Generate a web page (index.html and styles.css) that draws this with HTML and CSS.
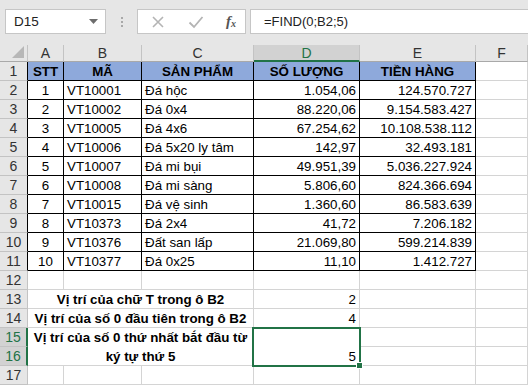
FILE: index.html
```html
<!DOCTYPE html>
<html lang="vi">
  <head>
    <meta charset="UTF-8" />
    <title>FIND</title>
    <link rel="stylesheet" href="styles.css">
  </head>
  <body>
    <!-- Formula bar -->
    <div class="toolbar">
      <div class="name-box">
        <span>D15</span>
        <svg class="caret" width="9" height="5" viewBox="0 0 9 5"><path d="M0 0h9L4.5 5z" fill="#6d6d6d"/></svg>
      </div>
      <div class="grip"><i></i><i></i><i></i></div>
      <div class="fx-buttons">
        <svg width="14" height="14" viewBox="0 0 14 14"><path d="M2 2l10 10M12 2L2 12" stroke="#b4b4b4" stroke-width="1.6"/></svg>
        <svg width="16" height="14" viewBox="0 0 16 14"><path d="M1.5 7.5l4.5 4.5L14.5 2" stroke="#b4b4b4" stroke-width="1.8" fill="none"/></svg>
        <span class="fx">f<sub>x</sub></span>
      </div>
      <div class="formula">=FIND(0;B2;5)</div>
    </div>

    <!-- Sheet -->
    <div class="sheet">
      <div class="ch corner"><svg width="12" height="12" viewBox="0 0 12 12"><path d="M12 0v12H0z" fill="#b7b7b7"/></svg></div>
      <div class="ch">A</div>
      <div class="ch">B</div>
      <div class="ch">C</div>
      <div class="ch sel">D</div>
      <div class="ch">E</div>
      <div class="ch">F</div>

      <div class="rh edge">1</div>
      <div class="c t head">STT</div>
      <div class="c t head">MÃ</div>
      <div class="c t head">SẢN PHẨM</div>
      <div class="c t head">SỐ LƯỢNG</div>
      <div class="c t head">TIỀN HÀNG</div>
      <div class="c"></div>

      <div class="rh edge">2</div><div class="c t mid">1</div><div class="c t">VT10001</div><div class="c t">Đá hộc</div><div class="c t num">1.054,06</div><div class="c t num">124.570.727</div><div class="c"></div>
      <div class="rh edge">3</div><div class="c t mid">2</div><div class="c t">VT10002</div><div class="c t">Đá 0x4</div><div class="c t num">88.220,06</div><div class="c t num">9.154.583.427</div><div class="c"></div>
      <div class="rh edge">4</div><div class="c t mid">3</div><div class="c t">VT10005</div><div class="c t">Đá 4x6</div><div class="c t num">67.254,62</div><div class="c t num">10.108.538.112</div><div class="c"></div>
      <div class="rh edge">5</div><div class="c t mid">4</div><div class="c t">VT10006</div><div class="c t">Đá 5x20 ly tâm</div><div class="c t num">142,97</div><div class="c t num">32.493.181</div><div class="c"></div>
      <div class="rh edge">6</div><div class="c t mid">5</div><div class="c t">VT10007</div><div class="c t">Đá mi bụi</div><div class="c t num">49.951,39</div><div class="c t num">5.036.227.924</div><div class="c"></div>
      <div class="rh edge">7</div><div class="c t mid">6</div><div class="c t">VT10008</div><div class="c t">Đá mi sàng</div><div class="c t num">5.806,60</div><div class="c t num">824.366.694</div><div class="c"></div>
      <div class="rh edge">8</div><div class="c t mid">7</div><div class="c t">VT10015</div><div class="c t">Đá vệ sinh</div><div class="c t num">1.360,60</div><div class="c t num">86.583.639</div><div class="c"></div>
      <div class="rh edge">9</div><div class="c t mid">8</div><div class="c t">VT10373</div><div class="c t">Đá 2x4</div><div class="c t num">41,72</div><div class="c t num">7.206.182</div><div class="c"></div>
      <div class="rh edge">10</div><div class="c t mid">9</div><div class="c t">VT10376</div><div class="c t">Đất san lấp</div><div class="c t num">21.069,80</div><div class="c t num">599.214.839</div><div class="c"></div>
      <div class="rh edge">11</div><div class="c t mid">10</div><div class="c t">VT10377</div><div class="c t">Đá 0x25</div><div class="c t num">11,10</div><div class="c t num">1.412.727</div><div class="c"></div>

      <div class="rh">12</div><div class="c"></div><div class="c"></div><div class="c"></div><div class="c"></div><div class="c"></div><div class="c"></div>

      <div class="rh">13</div><div class="c label span3">Vị trí của chữ T trong ô B2</div><div class="c num">2</div><div class="c"></div><div class="c"></div>
      <div class="rh">14</div><div class="c label span3">Vị trí của số 0 đầu tiên trong ô B2</div><div class="c num">4</div><div class="c"></div><div class="c"></div>

      <div class="rh rsel">15</div>
      <div class="c label span3 tall">Vị trí của số 0 thứ nhất bắt đầu từ<br>ký tự thứ 5</div>
      <div class="c num tall active">5</div>
      <div class="c"></div><div class="c"></div>
      <div class="rh rsel">16</div><div class="c"></div><div class="c"></div>

      <div class="rh">17</div><div class="c"></div><div class="c"></div><div class="c"></div><div class="c"></div><div class="c"></div><div class="c"></div>
    </div>
  </body>
</html>
```

FILE: styles.css
```css
/* General */
body {
  margin: 0;
  font-family: "Liberation Sans", Arial, sans-serif;
  background: #ffffff;
  color: #000;
  overflow: hidden;
}

/* Formula bar */
.toolbar {
  height: 45px;
  background: #e6e6e6;
  display: flex;
  align-items: flex-start;
  padding-top: 9px;
  box-sizing: border-box;
}

.name-box {
  width: 101px;
  height: 25px;
  margin-left: 5px;
  box-sizing: border-box;
  background: #fff;
  border: 1px solid #c6c6c6;
  display: flex;
  align-items: center;
  justify-content: space-between;
  padding: 0 7px 0 8px;
  font-size: 13.5px;
  color: #222;
}

.grip {
  width: 31px;
  height: 25px;
  display: flex;
  flex-direction: column;
  align-items: center;
  justify-content: center;
  gap: 2px;
}

.grip i {
  width: 2px;
  height: 2px;
  background: #a8a8a8;
}

.fx-buttons {
  width: 109px;
  height: 25px;
  box-sizing: border-box;
  background: #fff;
  border: 1px solid #c6c6c6;
  display: flex;
  align-items: center;
  justify-content: space-between;
  padding: 0 9px 0 13px;
}

.fx {
  font-family: "Liberation Serif", serif;
  font-style: italic;
  font-size: 15px;
  color: #555;
  font-weight: bold;
}

.fx sub {
  font-size: 10px;
  vertical-align: -1px;
}

.formula {
  flex: 1;
  height: 25px;
  margin-left: 4px;
  box-sizing: border-box;
  background: #fff;
  border: 1px solid #c6c6c6;
  border-right: none;
  padding-left: 13px;
  line-height: 23px;
  font-size: 13px;
  color: #222;
}

/* Grid */
.sheet {
  display: grid;
  grid-template-columns: 28px 36px 78px 112px 106px 116px 52px;
  grid-template-rows: 17px;
  grid-auto-rows: 19px;
}

.ch,
.rh {
  background: #e6e6e6;
  color: #333;
  font-size: 14px;
  box-sizing: border-box;
  border-right: 1px solid #c3c3c3;
  border-bottom: 1px solid #c3c3c3;
  display: flex;
  align-items: center;
  justify-content: center;
}

.ch {
  line-height: 16px;
  border-bottom-color: #a9a9a9;
}

.corner {
  justify-content: flex-end;
  align-items: flex-end;
  padding: 0 3px 3px 0;
}

.ch.sel {
  background: #d2d2d2;
  color: #217346;
  border-bottom: 2px solid #217346;
}

.rh.edge {
  border-right-color: #000;
}

.rh.rsel {
  background: #d2d2d2;
  color: #217346;
  border-right: 2px solid #217346;
}

.c {
  box-sizing: border-box;
  border-right: 1px solid #d4d4d4;
  border-bottom: 1px solid #d4d4d4;
  font-size: 13.33px;
  line-height: 17px;
  padding: 0 3px;
  display: flex;
  align-items: flex-end;
  white-space: nowrap;
}

.c.t {
  border-right-color: #000;
  border-bottom-color: #000;
}

.head {
  background: #8ea9db;
  font-weight: bold;
  justify-content: center;
}

.mid {
  justify-content: center;
}

.num {
  justify-content: flex-end;
}

.label {
  font-weight: bold;
  justify-content: center;
  text-align: center;
}

.span3 {
  grid-column: span 3;
}

.tall {
  grid-row: span 2;
}

.label.tall {
  align-items: center;
  line-height: 19px;
  white-space: normal;
  padding-top: 1px;
}

/* Selected cell */
.active {
  position: relative;
}

.active::after {
  content: "";
  position: absolute;
  left: -2px;
  top: -1px;
  right: -2px;
  bottom: -2px;
  border: 2px solid #217346;
}

.active::before {
  content: "";
  position: absolute;
  right: -4px;
  bottom: -4px;
  width: 5px;
  height: 5px;
  background: #217346;
  border: 1px solid #fff;
  z-index: 1;
}
```
